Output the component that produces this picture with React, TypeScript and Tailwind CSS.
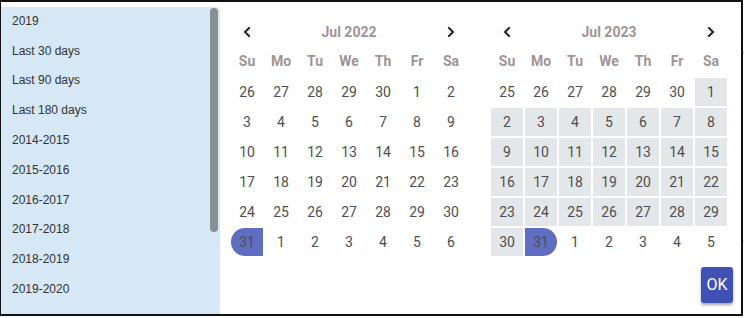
import React from "react"

const presets = [
  "2019",
  "Last 30 days",
  "Last 90 days",
  "Last 180 days",
  "2014-2015",
  "2015-2016",
  "2016-2017",
  "2017-2018",
  "2018-2019",
  "2019-2020",
  "2020-2021",
]

const weekDays = ["Su", "Mo", "Tu", "We", "Th", "Fr", "Sa"]

type Day = { n: number; kind: "out" | "plain" | "range" | "startSel" | "endSel" }

function buildMonth(prevStart: number, prevEnd: number, days: number, mode: "first" | "second"): Day[] {
  const cells: Day[] = []
  for (let d = prevStart; d <= prevEnd; d++) cells.push({ n: d, kind: "out" })
  for (let d = 1; d <= days; d++) {
    if (d === 31) cells.push({ n: d, kind: mode === "first" ? "startSel" : "endSel" })
    else cells.push({ n: d, kind: mode === "second" ? "range" : "plain" })
  }
  let next = 1
  while (cells.length < 42) cells.push({ n: next++, kind: "out" })
  return cells
}

function Chevron({ dir }: { dir: "left" | "right" }) {
  return (
    <svg width="8" height="10" viewBox="0 0 8 10" fill="none">
      <polyline
        points={dir === "left" ? "6,1 2,5 6,9" : "2,1 6,5 2,9"}
        stroke="#222"
        strokeWidth="2"
        strokeLinecap="square"
      />
    </svg>
  )
}

function Month({ title, cells }: { title: string; cells: Day[] }) {
  return (
    <div className="w-[236px] flex flex-col">
      <div className="grid grid-cols-[32px_1fr_32px] h-[30px] items-center">
        <div className="flex justify-center">
          <Chevron dir="left" />
        </div>
        <div className="text-center text-[14px] font-bold text-[#9f9494]">{title}</div>
        <div className="flex justify-center">
          <Chevron dir="right" />
        </div>
      </div>
      <div className="grid grid-cols-7 gap-x-[2px] h-[29px] items-center mb-[2px]">
        {weekDays.map((w) => (
          <div key={w} className="text-center text-[14px] font-bold text-[#9f9494]">
            {w}
          </div>
        ))}
      </div>
      <div className="grid grid-cols-7 gap-[2px]">
        {cells.map((c, i) => (
          <div
            key={i}
            className={
              "h-[28px] flex items-center justify-center text-[14px] text-[#4e4e4e] " +
              (c.kind === "range"
                ? "bg-[#e4e7e9]"
                : c.kind === "startSel"
                ? "bg-[#5f6dc2] rounded-l-full"
                : c.kind === "endSel"
                ? "bg-[#5f6dc2] rounded-r-full"
                : "")
            }
          >
            {c.n}
          </div>
        ))}
      </div>
    </div>
  )
}

export default function App() {
  const jul2022 = buildMonth(26, 30, 31, "first")
  const jul2023 = buildMonth(25, 30, 31, "second")

  return (
    <div className="w-[744px] h-[318px] bg-white flex" style={{ fontFamily: "Roboto, sans-serif" }}>
      <div className="w-[743px] h-[316px] border-t-2 border-l border-r-2 border-b-2 border-[#111] flex">
        {/* Presets */}
        <div className="w-[219px] mt-[5px] bg-[#d6e7f5] rounded-tr-[4px] overflow-hidden flex">
          <div
            className="flex-1 -mt-[1px] pl-[11px] text-[12px] text-[#333]"
            style={{ fontFamily: '"Liberation Sans", Arial, sans-serif' }}
          >
            {presets.map((p) => (
              <div key={p} className="h-[29.8px] flex items-center">
                {p}
              </div>
            ))}
          </div>
          <div className="w-[8px] h-[224px] mt-[1px] mr-[2px] rounded-full bg-[#868e96]" />
        </div>

        {/* Calendars */}
        <div className="flex-1 flex flex-col pl-[11px] pt-[15px] pr-[8px] pb-[11px]">
          <div className="flex gap-[24px]">
            <Month title="Jul 2022" cells={jul2022} />
            <Month title="Jul 2023" cells={jul2023} />
          </div>
          <div className="flex-1" />
          <div className="flex justify-end">
            <button className="w-[32px] h-[36px] rounded-[3px] bg-[#3f51b5] text-white text-[16px] shadow-[0_2px_3px_rgba(0,0,0,0.35)]">
              OK
            </button>
          </div>
        </div>
      </div>
      <div className="w-px flex flex-col">
        <div className="mt-[33px] h-px bg-[#ddd]" />
        <div className="mt-[18px] h-px bg-[#999]" />
        <div className="mt-[188px] h-px bg-[#bbb]" />
      </div>
    </div>
  )
}
